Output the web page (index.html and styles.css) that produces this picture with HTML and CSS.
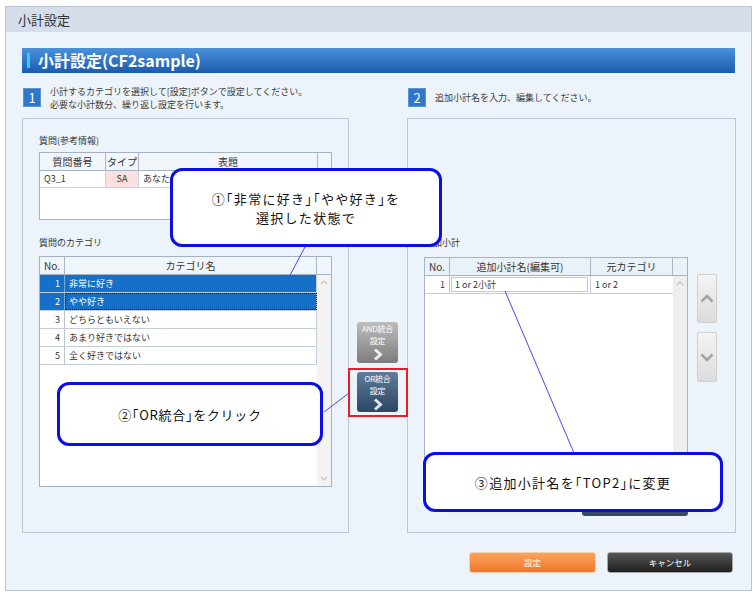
FILE: index.html
```html
<!DOCTYPE html>
<html lang="ja">
<head>
<meta charset="utf-8">
<title>小計設定</title>
<link rel="stylesheet" href="styles.css">
</head>
<body>
<div class="window">
  <div class="titlebar">小計設定</div>
  <div class="content">
    <div class="heading"><span class="accent"></span>小計設定(CF2sample)</div>
    <div class="columns">
      <div class="col-left">
        <div class="step"><span class="num">1</span><p>小計するカテゴリを選択して[設定]ボタンで設定してください。<br>必要な小計数分、繰り返し設定を行います。</p></div>
        <div class="panel panel-left">
          <div class="label">質問(参考情報)</div>
          <div class="qtable">
            <div class="qhead">
              <div class="c-qno">質問番号</div><div class="c-type">タイプ</div><div class="c-title">表題</div><div class="c-sb"></div>
            </div>
            <div class="qrow">
              <div class="c-qno">Q3_1</div><div class="c-type sa">SA</div><div class="c-title">あなたはこの商品が好きですか。</div>
            </div>
          </div>
          <div class="label label2">質問のカテゴリ</div>
          <div class="ctable">
            <div class="chead">
              <div class="c-no">No.</div><div class="c-name">カテゴリ名</div><div class="c-sb"></div>
            </div>
            <div class="cbody">
              <div class="rows">
                <div class="crow sel"><div class="c-no">1</div><div class="c-name">非常に好き</div></div>
                <div class="crow sel focus"><div class="c-no">2</div><div class="c-name">やや好き</div></div>
                <div class="crow"><div class="c-no">3</div><div class="c-name">どちらともいえない</div></div>
                <div class="crow"><div class="c-no">4</div><div class="c-name">あまり好きではない</div></div>
                <div class="crow"><div class="c-no">5</div><div class="c-name">全く好きではない</div></div>
              </div>
              <div class="vscroll">
                <svg class="sa-up" width="8" height="5" viewBox="0 0 8 5"><polyline points="1,4 4,1 7,4" fill="none" stroke="#c4c4c4" stroke-width="1.2"/></svg>
                <svg class="sa-down" width="8" height="5" viewBox="0 0 8 5"><polyline points="1,1 4,4 7,1" fill="none" stroke="#c4c4c4" stroke-width="1.2"/></svg>
              </div>
            </div>
          </div>
        </div>
      </div>
      <div class="col-mid">
        <div class="mbtn and"><span>AND統合<br>設定</span>
          <svg width="10" height="13" viewBox="0 0 10 13"><polyline points="2,1.5 7.5,6.5 2,11.5" fill="none" stroke="#eeeeee" stroke-width="3"/></svg>
        </div>
        <div class="mbtn or"><span>OR統合<br>設定</span>
          <svg width="10" height="13" viewBox="0 0 10 13"><polyline points="2,1.5 7.5,6.5 2,11.5" fill="none" stroke="#dfe6ee" stroke-width="3"/></svg>
        </div>
      </div>
      <div class="col-right">
        <div class="step"><span class="num">2</span><p>追加小計名を入力、編集してください。</p></div>
        <div class="panel panel-right">
          <div class="label">追加小計</div>
          <div class="rp-row">
            <div class="rtable">
              <div class="rhead">
                <div class="r-no">No.</div><div class="r-name">追加小計名(編集可)</div><div class="r-cat">元カテゴリ</div><div class="c-sb"></div>
              </div>
              <div class="rbody">
                <div class="rows">
                  <div class="rrow"><div class="r-no">1</div><div class="r-name"><span class="inp">1 or 2小計</span></div><div class="r-cat">1 or 2</div></div>
                </div>
                <div class="vscroll gray">
                  <svg class="sa-up" width="8" height="5" viewBox="0 0 8 5"><polyline points="1,4 4,1 7,4" fill="none" stroke="#c4c4c4" stroke-width="1.2"/></svg>
                </div>
              </div>
            </div>
            <div class="updown">
              <div class="ud">
                <svg width="14" height="9" viewBox="0 0 14 9"><polyline points="1.5,7.5 7,2 12.5,7.5" fill="none" stroke="#a4a4a4" stroke-width="2.6"/></svg>
              </div>
              <div class="ud">
                <svg width="14" height="9" viewBox="0 0 14 9"><polyline points="1.5,1.5 7,7 12.5,1.5" fill="none" stroke="#a4a4a4" stroke-width="2.6"/></svg>
              </div>
            </div>
          </div>
          <div class="darkbtn">削除</div>
        </div>
      </div>
    </div>
    <div class="footer">
      <div class="fbtn ok">設定</div>
      <div class="fbtn cancel">キャンセル</div>
    </div>
  </div>
</div>

<svg class="lines" width="755" height="595" viewBox="0 0 755 595">
  <line x1="305" y1="247" x2="288" y2="279" stroke="#4646ff" stroke-width="1"/>
  <line x1="324" y1="412" x2="349" y2="393" stroke="#4646ff" stroke-width="1"/>
  <line x1="505" y1="291" x2="574" y2="453" stroke="#4646ff" stroke-width="1"/>
</svg>
<div class="redframe"></div>
<div class="callout co1">①「非常に好き」「やや好き」を<br>選択した状態で</div>
<div class="callout co2">②「OR統合」をクリック</div>
<div class="callout co3">③追加小計名を「TOP2」に変更</div>
</body>
</html>
```
FILE: styles.css
```css
* { box-sizing: border-box; }
html, body { margin: 0; padding: 0; background: #ffffff; }
body {
  position: relative;
  width: 755px;
  height: 595px;
  overflow: hidden;
  font-family: "Noto Sans CJK JP", "Noto Sans", sans-serif;
  font-size: 9px;
  color: #333333;
}
p { margin: 0; }

.window {
  margin: 6px 0 0 5px;
  width: 747px;
  height: 585px;
  border: 1px solid #b9c2ce;
  background: #edf3fa;
  display: flex;
  flex-direction: column;
}
.titlebar {
  height: 25px;
  background: #d5deea;
  padding-left: 12px;
  font-size: 13px;
  line-height: 25px;
  color: #333;
}
.content {
  flex: 1;
  padding: 16px 15px 0 16px;
  display: flex;
  flex-direction: column;
}
.heading {
  height: 25px;
  margin-right: 1px;
  background: linear-gradient(#4a92da, #1a5bb0);
  color: #fff;
  font-weight: bold;
  font-size: 16px;
  line-height: 25px;
  display: flex;
  align-items: center;
  padding-left: 5px;
}
.accent {
  width: 3px;
  height: 15px;
  background: #38c8f2;
  margin-right: 8px;
}

.columns { display: flex; margin-top: 15px; }
.col-left { width: 327px; display: flex; flex-direction: column; }
.col-mid {
  width: 58px;
  display: flex;
  flex-direction: column;
  align-items: flex-start;
  padding: 234px 0 0 8px;
  gap: 9px;
}
.col-right { width: 329px; display: flex; flex-direction: column; }

.step {
  height: 19px;
  margin-bottom: 11px;
  display: flex;
  align-items: center;
}
.step p { margin-left: 9px; line-height: 13px; font-size: 9px; color: #3a3a3a; }
.num {
  margin-left: 1px;
  width: 18px;
  height: 19px;
  background: #2f78c8;
  border: 1px solid #5b95d6;
  color: #fff;
  font-size: 13px;
  line-height: 17px;
  text-align: center;
  flex: none;
}

.panel {
  height: 415px;
  border: 1px solid #bcc6d2;
  padding: 15px 16px 0 16px;
}
.label { height: 14px; line-height: 14px; margin-bottom: 4px; color: #333; }
.label2 { margin-top: 16px; margin-bottom: 6px; }

/* question table */
.qtable {
  width: 293px;
  height: 68px;
  border: 1px solid #a3b3c4;
  background: #fff;
}
.qhead, .chead, .rhead {
  display: flex;
  height: 18px;
  background: #f1f6fb;
  border-bottom: 1px solid #a3b3c4;
  font-size: 10px;
  line-height: 17px;
  text-align: center;
  color: #333;
}
.qhead > div, .chead > div, .rhead > div { border-right: 1px solid #a9b8c8; }
.qhead > div:last-child, .chead > div:last-child, .rhead > div:last-child { border-right: none; }
.c-qno { width: 66px; }
.c-type { width: 33px; }
.c-title { width: 179px; }
.c-sb { width: 13px; }
.qrow {
  display: flex;
  height: 17px;
  border-bottom: 1px solid #c9d3dd;
  line-height: 16px;
}
.qrow > div { border-right: 1px solid #c9d3dd; white-space: nowrap; overflow: hidden; }
.qrow .c-qno { padding-left: 4px; }
.qrow .sa { background: #fbe0e1; text-align: center; }
.qrow .c-title { width: 192px; padding-left: 4px; border-right: none; }

/* category table */
.ctable {
  width: 293px;
  height: 231px;
  border: 1px solid #a3b3c4;
  background: #fff;
  display: flex;
  flex-direction: column;
}
.chead .c-no { width: 25px; }
.chead .c-name { width: 252px; }
.chead .c-sb { width: 14px; }
.cbody { flex: 1; display: flex; }
.rows { flex: 1; }
.crow {
  display: flex;
  height: 18px;
  border-bottom: 1px solid #c4ced8;
  line-height: 17px;
}
.crow .c-no { width: 25px; text-align: right; padding-right: 4px; border-right: 1px solid #b8c4d0; }
.crow .c-name { flex: 1; padding-left: 4px; border-right: 1px solid #c4ced8; }
.crow.sel { background: #1570c8; color: #fff; }
.crow.sel .c-no { border-right-color: #78a8d8; }
.crow.focus .c-name { outline: 1px dotted #1a1a1a; outline-offset: -1px; }
.vscroll {
  width: 14px;
  background: #f3f3f3;
  position: relative;
}
.vscroll.gray { background: #eeeeee; }
.sa-up { position: absolute; left: 3px; top: 5px; }
.sa-down { position: absolute; left: 3px; bottom: 5px; }

/* middle buttons */
.mbtn {
  width: 41px;
  border-radius: 3px;
  color: #fff;
  font-size: 8px;
  line-height: 12px;
  text-align: center;
  padding-top: 1px;
  display: flex;
  flex-direction: column;
  align-items: center;
  letter-spacing: -0.2px;
  white-space: nowrap;
}
.mbtn svg { margin-top: 1px; }
.mbtn.and { height: 41px; background: linear-gradient(#bdbdbd, #7d7d7d); }
.mbtn.or { height: 40px; background: linear-gradient(#5f7c9c, #2c4663); }

/* right panel */
.panel-right { padding-top: 117px; }
.panel-right .label { margin-bottom: 7px; }
.rp-row { display: flex; }
.rtable {
  width: 264px;
  height: 230px;
  border: 1px solid #a3b3c4;
  background: #fff;
  display: flex;
  flex-direction: column;
}
.rhead { background: #e9f1f9; }
.rhead .r-no { width: 25px; }
.rhead .r-name { width: 141px; }
.rhead .r-cat { width: 82px; }
.rhead .c-sb { width: 14px; }
.rbody { flex: 1; display: flex; }
.rrow {
  display: flex;
  height: 18px;
  border-bottom: 1px solid #c4ced8;
  line-height: 17px;
}
.rrow .r-no { width: 25px; text-align: right; padding-right: 4px; border-right: 1px solid #b8c4d0; }
.rrow .r-name { width: 141px; padding: 1px 2px 1px 1px; border-right: 1px solid #c4ced8; }
.rrow .inp {
  display: block;
  height: 15px;
  line-height: 13px;
  border: 1px solid #c8c8c8;
  padding-left: 3px;
}
.rrow .r-cat { flex: 1; padding-left: 4px; }
.updown {
  margin-left: 9px;
  padding-top: 17px;
  display: flex;
  flex-direction: column;
  gap: 9px;
}
.ud {
  width: 20px;
  height: 49px;
  border: 1px solid #cfcfcf;
  border-radius: 2px;
  background: linear-gradient(#f4f4f4, #dcdcdc);
  display: flex;
  align-items: center;
  justify-content: center;
}
.ud + .ud { height: 50px; }
.darkbtn {
  margin: 7px 0 0 158px;
  width: 106px;
  height: 22px;
  border-radius: 3px;
  background: linear-gradient(#55687c, #34475a);
  color: #fff;
  text-align: center;
  line-height: 22px;
}

/* footer */
.footer {
  display: flex;
  justify-content: flex-end;
  gap: 11px;
  margin-top: 19px;
  padding-right: 3px;
}
.fbtn {
  width: 127px;
  height: 21px;
  border-radius: 3px;
  color: #fff;
  font-size: 8.5px;
  line-height: 19px;
  text-align: center;
}
.fbtn.ok {
  border: 1px solid #f7cfa8;
  background: linear-gradient(#fca35f, #ef772b);
}
.fbtn.cancel {
  width: 126px;
  border: 1px solid #a9a9a9;
  background: linear-gradient(#575757, #1f1f1f);
}

/* annotations */
.lines { position: absolute; left: 0; top: 0; pointer-events: none; }
.redframe {
  position: absolute;
  left: 348px;
  top: 368px;
  width: 60px;
  height: 49px;
  border: 2px solid #ec1c24;
}
.callout {
  position: absolute;
  background: #fff;
  border: 3px solid #0d0de8;
  border-radius: 12px;
  color: #111;
  font-size: 13px;
  line-height: 19px;
  letter-spacing: 1.3px;
  font-feature-settings: "halt";
  display: flex;
  align-items: center;
  justify-content: center;
  text-align: center;
}
.co1 { left: 170px; top: 168px; width: 272px; height: 79px; }
.co2 { left: 57px; top: 382px; width: 266px; height: 64px; letter-spacing: 0.7px; }
.co3 { left: 423px; top: 452px; width: 300px; height: 60px; letter-spacing: 1.3px; }
```
